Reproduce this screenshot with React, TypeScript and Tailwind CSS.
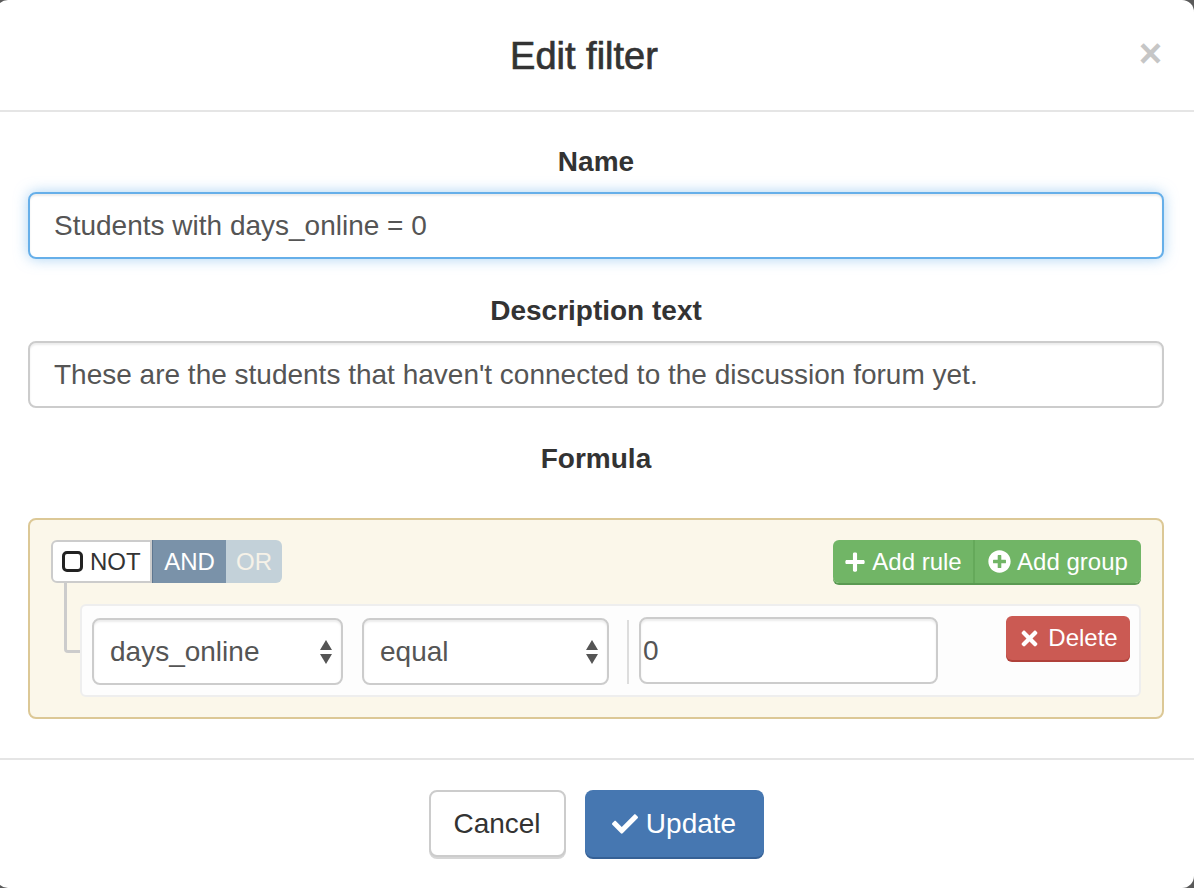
import React from "react";
import { FaCheck, FaPlus, FaPlusCircle, FaTimes } from "react-icons/fa";

function SelectArrows() {
  return (
    <svg width="14" height="26" viewBox="0 0 14 26" className="shrink-0">
      <path d="M7 1 L13 11 L1 11 Z" fill="#555" />
      <path d="M1 15 L13 15 L7 25 Z" fill="#555" />
    </svg>
  );
}

function Select({ value, width }: { value: string; width: string }) {
  return (
    <div
      className={`${width} h-[67px] shrink-0 bg-white border-2 border-[#ccc] rounded-[8px] flex items-center justify-between pl-[16px] pr-[8px] text-[28px] text-[#555] shadow-[inset_0_2px_2px_rgba(0,0,0,0.075)]`}
    >
      <span>{value}</span>
      <SelectArrows />
    </div>
  );
}

export default function App() {
  return (
    <div
      className="w-[1194px] h-[888px] bg-[#5a5a5a] overflow-hidden"
      style={{ fontFamily: '"Liberation Sans", Arial, sans-serif' }}
    >
      <div className="-ml-[4px] w-[1198px] h-[888px] bg-white rounded-[12px] flex flex-col">
        {/* Header */}
        <div className="relative h-[112px] shrink-0 border-b-2 border-[#e5e5e5] flex items-center justify-center pr-[22px]">
          <h4 className="text-[38px] leading-[40px] text-[#333] [-webkit-text-stroke:0.7px_#333] pt-[2px]">
            Edit filter
          </h4>
          <span className="absolute right-[32px] top-[33px] text-[40px] font-bold leading-[40px] text-[#c6c6c6]">
            ×
          </span>
        </div>

        {/* Body */}
        <div className="pl-[32px] pr-[30px] pt-[33px] flex flex-col">
          <label className="block text-center text-[28px] font-bold leading-[34px] text-[#333] mb-[13px]">
            Name
          </label>
          <div className="h-[67px] border-2 border-[#66afe9] rounded-[8px] flex items-center px-[24px] text-[28px] text-[#555] shadow-[inset_0_2px_2px_rgba(0,0,0,0.075),0_0_14px_rgba(102,175,233,0.55)]">
            Students with days_online = 0
          </div>

          <label className="block text-center text-[28px] font-bold leading-[34px] text-[#333] mt-[35px] mb-[13px]">
            Description text
          </label>
          <div className="h-[67px] border-2 border-[#ccc] rounded-[8px] flex items-center px-[24px] text-[28px] text-[#555] shadow-[inset_0_2px_2px_rgba(0,0,0,0.075)]">
            These are the students that haven't connected to the discussion forum yet.
          </div>

          <label className="block text-center text-[28px] font-bold leading-[34px] text-[#333] mt-[34px] mb-[42px]">
            Formula
          </label>

          {/* Query builder */}
          <div className="border-2 border-[#dcc896] bg-[#fbf7ea] rounded-[8px] px-[21px] py-[20px]">
            <div className="flex items-start justify-between h-[43px]">
              <div className="flex h-[43px] text-[24px]">
                <div className="w-[101px] h-[43px] bg-white border-2 border-[#ccc] rounded-l-[6px] flex items-center pl-[9px] gap-[7px] text-[#333]">
                  <span className="w-[21px] h-[21px] border-[3.5px] border-[#222] rounded-[5px] inline-block" />
                  <span>NOT</span>
                </div>
                <div className="w-[74px] h-[43px] bg-[#7a92a9] border-l border-[#5f7790] text-white flex items-center justify-center">
                  AND
                </div>
                <div className="w-[56px] h-[43px] bg-[#c3d1d9] text-[#f6f2e8] rounded-r-[6px] flex items-center justify-center">
                  OR
                </div>
              </div>
              <div className="flex h-[43px] rounded-[6px] overflow-hidden text-[24px] text-white shadow-[0_2px_0_#5a9a52]">
                <div className="w-[142px] bg-[#71b566] flex items-center justify-center gap-[6px] border-r-2 border-[#65a95a]">
                  <FaPlus className="w-[22px] h-[22px]" />
                  <span>Add rule</span>
                </div>
                <div className="w-[166px] bg-[#71b566] flex items-center justify-center gap-[6px]">
                  <FaPlusCircle className="w-[23px] h-[23px]" />
                  <span>Add group</span>
                </div>
              </div>
            </div>

            <div className="relative ml-[29px] mt-[21px]">
              <div className="absolute left-[-16px] top-[-21px] w-[16px] h-[70px] border-l-[3px] border-b-[3px] border-[#ccc] rounded-bl-[4px]" />
              <div className="h-[93px] bg-[#fdfdfd] border-2 border-[#eeeeee] rounded-[6px] pl-[10px] pr-[9px] pt-[12px] flex items-start">
                <Select value="days_online" width="w-[251px]" />
                <div className="ml-[19px]">
                  <Select value="equal" width="w-[247px]" />
                </div>
                <div className="ml-[18px] mt-[2px] w-[2px] h-[64px] bg-[#dddddd] shrink-0" />
                <div className="ml-[10px] w-[299px] h-[67px] shrink-0 bg-white border-2 border-[#ccc] rounded-[8px] flex items-center pl-[2px] text-[28px] text-[#555] shadow-[inset_0_2px_2px_rgba(0,0,0,0.075)] -mt-[1px]">
                  0
                </div>
                <div className="ml-auto -mt-[2px] w-[124px] h-[44px] bg-[#cb5a53] rounded-[6px] shadow-[0_2px_0_#b0413a] text-white text-[24px] flex items-center justify-center gap-[7px]">
                  <FaTimes className="w-[23px] h-[23px]" />
                  <span>Delete</span>
                </div>
              </div>
            </div>
          </div>
        </div>

        {/* Footer */}
        <div className="mt-[39px] border-t-2 border-[#e5e5e5] pt-[30px] flex justify-center gap-[19px] pl-[2px]">
          <div className="w-[137px] h-[67px] bg-white border-2 border-[#ccc] rounded-[8px] shadow-[0_2px_0_#d6d6d6] flex items-center justify-center text-[28px] text-[#333]">
            Cancel
          </div>
          <div className="w-[179px] h-[67px] bg-[#4677b1] rounded-[8px] shadow-[0_2px_0_#356095] flex items-center justify-center gap-[8px] text-[28px] text-white">
            <FaCheck className="w-[26px] h-[26px]" />
            <span>Update</span>
          </div>
        </div>
      </div>
    </div>
  );
}
